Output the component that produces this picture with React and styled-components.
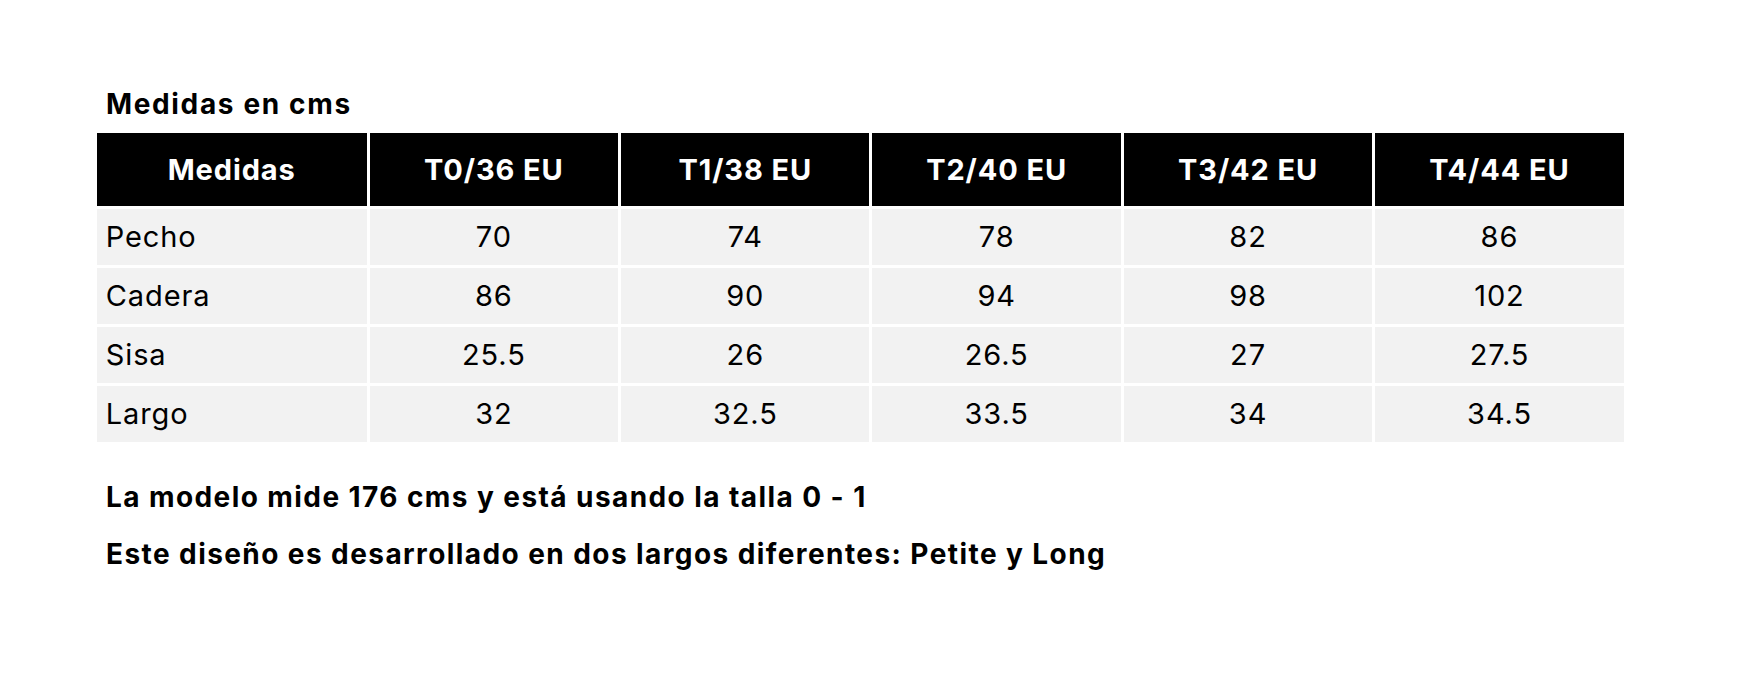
import React from 'react'
import styled, { createGlobalStyle } from 'styled-components'

const GlobalStyle = createGlobalStyle`
  html, body {
    margin: 0;
    padding: 0;
    background: #fff;
  }
  body {
    font-family: Inter, "Open Sans", sans-serif;
    color: #000;
  }
`

const Page = styled.div`
  width: 1748px;
  height: 690px;
  box-sizing: border-box;
  padding: 86px 0 0 97px;
`

const Title = styled.h3`
  margin: 0 0 11px 9px;
  font-size: 28px;
  line-height: 36px;
  font-weight: 700;
  letter-spacing: 1.65px;
`

const Table = styled.table`
  border-collapse: separate;
  border-spacing: 3.3px;
  margin: -3.3px;
  width: 1533px;
  table-layout: fixed;
`

const HeadCell = styled.th`
  background: #000;
  color: #fff;
  height: 73px;
  padding: 0;
  font-size: 29px;
  font-weight: 700;
  letter-spacing: 0.9px;
  text-align: center;
`

const Cell = styled.td`
  background: #f2f2f2;
  height: 56px;
  padding: 0 ${p => (p.$label ? '9px' : '0')};
  font-size: 29px;
  font-weight: 400;
  letter-spacing: 0.9px;
  text-align: ${p => (p.$label ? 'left' : 'center')};
`

const Note = styled.p`
  margin: ${p => (p.$first ? '28px' : '0')} 0 0 9px;
  font-size: 28px;
  line-height: 57px;
  font-weight: 700;
  letter-spacing: 1.42px;
`

const sizes = ['T0/36 EU', 'T1/38 EU', 'T2/40 EU', 'T3/42 EU', 'T4/44 EU']

const rows = [
  ['Pecho', '70', '74', '78', '82', '86'],
  ['Cadera', '86', '90', '94', '98', '102'],
  ['Sisa', '25.5', '26', '26.5', '27', '27.5'],
  ['Largo', '32', '32.5', '33.5', '34', '34.5'],
]

export default function App() {
  return (
    <Page>
      <GlobalStyle />
      <Title>Medidas en cms</Title>
      <Table>
        <colgroup>
          <col style={{ width: '270px' }} />
          {sizes.map(s => <col key={s} />)}
        </colgroup>
        <thead>
          <tr>
            <HeadCell>Medidas</HeadCell>
            {sizes.map(s => <HeadCell key={s}>{s}</HeadCell>)}
          </tr>
        </thead>
        <tbody>
          {rows.map(r => (
            <tr key={r[0]}>
              {r.map((v, i) => <Cell key={i} $label={i === 0}>{v}</Cell>)}
            </tr>
          ))}
        </tbody>
      </Table>
      <Note $first>La modelo mide 176 cms y está usando la talla 0 - 1</Note>
      <Note>Este diseño es desarrollado en dos largos diferentes: Petite y Long</Note>
    </Page>
  )
}
